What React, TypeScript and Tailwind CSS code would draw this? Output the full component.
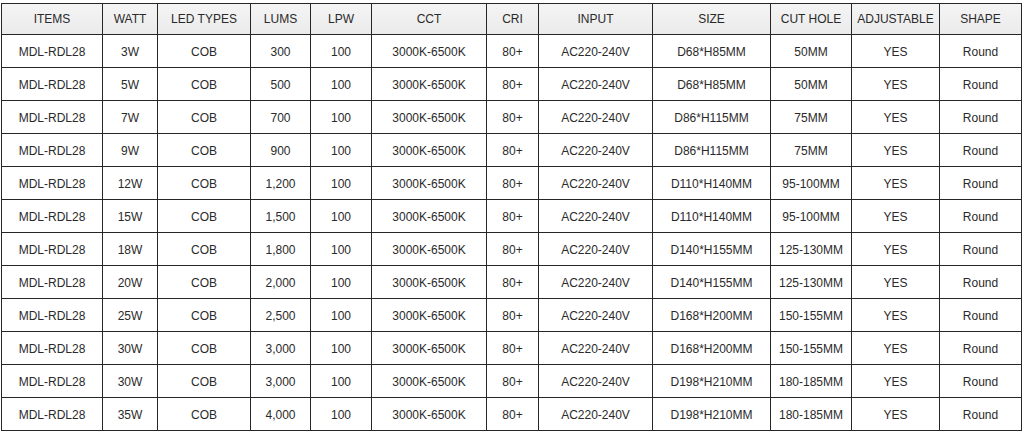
const COLS = [
  { label: "ITEMS", w: 101 },
  { label: "WATT", w: 55 },
  { label: "LED TYPES", w: 93 },
  { label: "LUMS", w: 60 },
  { label: "LPW", w: 61 },
  { label: "CCT", w: 115 },
  { label: "CRI", w: 52 },
  { label: "INPUT", w: 114 },
  { label: "SIZE", w: 118 },
  { label: "CUT HOLE", w: 81 },
  { label: "ADJUSTABLE", w: 88 },
  { label: "SHAPE", w: 82 },
];

const SPECS: [string, string, string, string][] = [
  ["3W", "300", "D68*H85MM", "50MM"],
  ["5W", "500", "D68*H85MM", "50MM"],
  ["7W", "700", "D86*H115MM", "75MM"],
  ["9W", "900", "D86*H115MM", "75MM"],
  ["12W", "1,200", "D110*H140MM", "95-100MM"],
  ["15W", "1,500", "D110*H140MM", "95-100MM"],
  ["18W", "1,800", "D140*H155MM", "125-130MM"],
  ["20W", "2,000", "D140*H155MM", "125-130MM"],
  ["25W", "2,500", "D168*H200MM", "150-155MM"],
  ["30W", "3,000", "D168*H200MM", "150-155MM"],
  ["30W", "3,000", "D198*H210MM", "180-185MM"],
  ["35W", "4,000", "D198*H210MM", "180-185MM"],
];

export default function App() {
  return (
    <div className="bg-white w-[1024px] h-[433px] pt-[3px] pl-[1px] font-['Liberation_Sans',Arial,sans-serif] text-[12px] text-[#2a2a2a]">
      <table className="table-fixed border-collapse w-[1021px]">
        <colgroup>
          {COLS.map((c) => (
            <col key={c.label} style={{ width: c.w }} />
          ))}
        </colgroup>
        <thead>
          <tr className="h-[31px] bg-gradient-to-b from-[#f4f4f4] to-[#ebebeb]">
            {COLS.map((c) => (
              <th key={c.label} className="border border-[#262626] font-normal text-center p-0 whitespace-nowrap">
                {c.label}
              </th>
            ))}
          </tr>
        </thead>
        <tbody>
          {SPECS.map(([watt, lums, size, hole], i) => (
            <tr key={i} className="h-[33px]">
              {["MDL-RDL28", watt, "COB", lums, "100", "3000K-6500K", "80+", "AC220-240V", size, hole, "YES", "Round"].map((v, j) => (
                <td key={j} className="border border-[#262626] text-center p-0 pt-[1px] whitespace-nowrap">
                  {v}
                </td>
              ))}
            </tr>
          ))}
        </tbody>
      </table>
    </div>
  );
}
